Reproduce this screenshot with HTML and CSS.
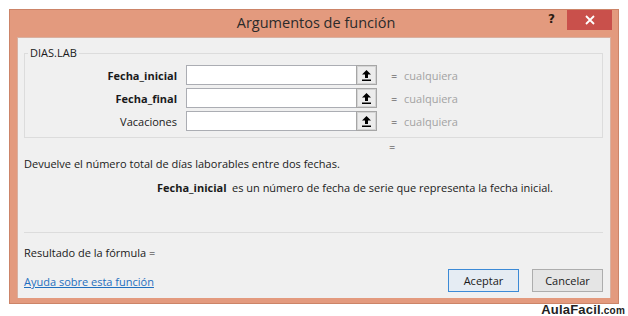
FILE: index.html
```html
<!DOCTYPE html>
<html lang="es">
<head>
<meta charset="utf-8">
<link rel="stylesheet" href="styles.css">
</head>
<body>
<div class="window">
  <div class="titlebar">
    <div class="title">Argumentos de función</div>
    <div class="help">?</div>
    <div class="close"><svg width="10" height="10" viewBox="0 0 10 10"><path d="M1 1 L9 9 M9 1 L1 9" stroke="#fff" stroke-width="1.8"/></svg></div>
  </div>
  <div class="content">
    <fieldset class="group">
      <legend>DIAS.LAB</legend>
      <div class="rows">
        <div class="row">
          <span class="label bold">Fecha_inicial</span>
          <span class="field"><span class="box"></span><span class="pick"><svg width="9" height="11" viewBox="0 0 9 11"><path d="M4.5 0 L9 4.5 L6 4.5 L6 8 L3 8 L3 4.5 L0 4.5 Z" fill="#000"/><rect x="0" y="9.5" width="9" height="1.5" fill="#000"/></svg></span></span>
          <span class="eq">=</span>
          <span class="val">cualquiera</span>
        </div>
        <div class="row">
          <span class="label bold">Fecha_final</span>
          <span class="field"><span class="box"></span><span class="pick"><svg width="9" height="11" viewBox="0 0 9 11"><path d="M4.5 0 L9 4.5 L6 4.5 L6 8 L3 8 L3 4.5 L0 4.5 Z" fill="#000"/><rect x="0" y="9.5" width="9" height="1.5" fill="#000"/></svg></span></span>
          <span class="eq">=</span>
          <span class="val">cualquiera</span>
        </div>
        <div class="row">
          <span class="label">Vacaciones</span>
          <span class="field"><span class="box"></span><span class="pick"><svg width="9" height="11" viewBox="0 0 9 11"><path d="M4.5 0 L9 4.5 L6 4.5 L6 8 L3 8 L3 4.5 L0 4.5 Z" fill="#000"/><rect x="0" y="9.5" width="9" height="1.5" fill="#000"/></svg></span></span>
          <span class="eq">=</span>
          <span class="val">cualquiera</span>
        </div>
      </div>
    </fieldset>
    <div class="result-eq">=</div>
    <div class="desc">Devuelve el número total de días laborables entre dos fechas.</div>
    <div class="argdesc"><span class="argname">Fecha_inicial</span><span class="argtext">es un número de fecha de serie que representa la fecha inicial.</span></div>
    <div class="sep"></div>
    <div class="formula">Resultado de la fórmula =</div>
    <div class="footer">
      <a class="link" href="#">Ayuda sobre esta función</a>
      <div class="buttons">
        <span class="btn default">Aceptar</span>
        <span class="btn">Cancelar</span>
      </div>
    </div>
  </div>
</div>
<div class="watermark">AulaFacil<span class="com">.com</span></div>
</body>
</html>
```
FILE: styles.css
```css
html, body {
  margin: 0;
  padding: 0;
  background: #ffffff;
}
body {
  padding: 9px 0 0 9px;
  font-family: "Open Sans", "Noto Sans", sans-serif;
  font-size: 11px;
  color: #1a1a1a;
}
.window {
  width: 608px;
  height: 293px;
  border: 1px solid #cc8468;
  background: #e39a7e;
  display: flex;
  flex-direction: column;
}
.titlebar {
  height: 27px;
  display: flex;
  align-items: flex-start;
}
.title {
  flex: 1;
  text-align: center;
  font-size: 14.5px;
  line-height: 26px;
  color: #2b2b2b;
  padding-left: 74px;
}
.help {
  font-family: "DejaVu Sans", sans-serif;
  font-weight: bold;
  font-size: 12px;
  color: #2b1a10;
  line-height: 18px;
  margin-right: 12px;
}
.close {
  width: 45px;
  height: 20px;
  background: #c9504b;
  display: flex;
  align-items: center;
  justify-content: center;
  margin-right: 6px;
}
.content {
  margin: 0 7px 0 7px;
  height: 261px;
  background: #f0f0f0;
  border: 1px solid #d9b0a0;
  border-bottom: none;
  box-sizing: border-box;
  padding: 8px 7px 0 6px;
  display: flex;
  flex-direction: column;
}
.group {
  margin: 0;
  padding: 0 0 5px 0;
  border: 1px solid #dcdcdc;
  height: 92px;
  box-sizing: border-box;
}
.group legend {
  padding: 0 2px;
  margin-left: 3px;
  line-height: 14px;
  color: #1a1a1a;
}
.rows {
  display: flex;
  flex-direction: column;
  gap: 3px;
  margin-top: 5px;
}
.row {
  display: flex;
  align-items: center;
  height: 20px;
}
.label {
  width: 152px;
  text-align: right;
  margin-right: 9px;
}
.bold {
  font-weight: bold;
}
.field {
  display: flex;
  width: 191px;
  height: 20px;
}
.box {
  flex: 1;
  background: #ffffff;
  border: 1px solid #abadb3;
  border-right: none;
}
.pick {
  width: 19px;
  height: 18px;
  border: 1px solid #a6a6a6;
  box-shadow: inset 0 0 0 1px #d4d4d4;
  background: #ececec;
  display: flex;
  align-items: center;
  justify-content: center;
}
.eq {
  margin-left: 14px;
  width: 13px;
  color: #333;
}
.val {
  color: #a3a3a3;
}
.result-eq {
  margin-left: 365px;
  margin-top: 1px;
  height: 16px;
  line-height: 16px;
  color: #333;
}
.desc {
  height: 16px;
  line-height: 16px;
  margin-top: 1px;
}
.argdesc {
  margin-top: 8px;
  height: 16px;
  line-height: 16px;
  display: flex;
}
.argname {
  font-weight: bold;
  margin-left: 133px;
  width: 75px;
}
.sep {
  margin-top: 36px;
  height: 1px;
  background: #dcdcdc;
}
.formula {
  margin-top: 12px;
  height: 16px;
  line-height: 16px;
}
.footer {
  margin-top: 8px;
  display: flex;
  align-items: center;
  justify-content: space-between;
}
.link {
  color: #1f6fbf;
  text-decoration: underline;
  margin-top: 2px;
}
.buttons {
  display: flex;
  gap: 13px;
}
.btn {
  width: 71px;
  height: 23px;
  box-sizing: border-box;
  border: 1px solid #adadad;
  background: #e5e5e5;
  display: flex;
  align-items: center;
  justify-content: center;
  color: #1a1a1a;
}
.btn.default {
  border-color: #3c8ad6;
  background: #e5ecf3;
}
.watermark {
  width: 616px;
  text-align: right;
  font-family: "Liberation Sans", sans-serif;
  font-weight: bold;
  font-size: 13px;
  line-height: 11px;
  color: #222;
  letter-spacing: 0.2px;
}
.watermark .com {
  font-size: 10px;
}
```
